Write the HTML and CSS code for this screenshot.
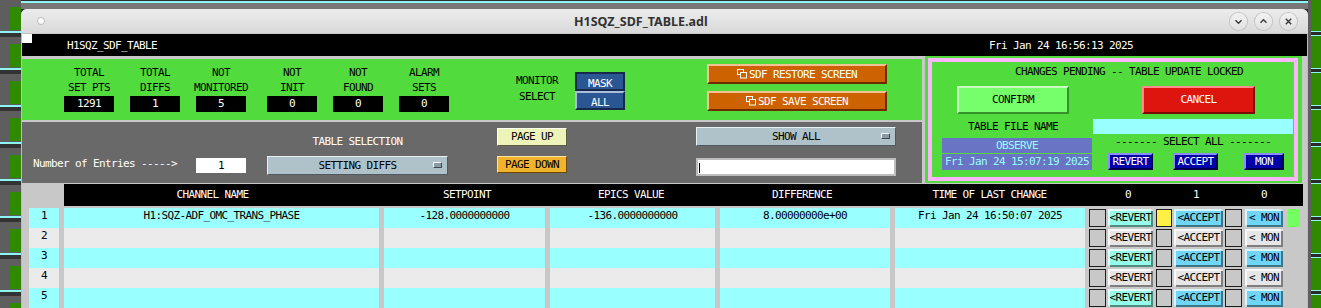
FILE: index.html
```html
<!DOCTYPE html>
<html lang="en">
<head>
    <meta charset="UTF-8">
    <title>H1SQZ_SDF_TABLE.adl</title>
    <link rel="stylesheet" href="styles.css">
</head>
<body>
<div class="desk-left"></div>
<div class="middle">
    <div class="desk-top"></div>
    <div class="window">
        <div class="titlebar">
            <span class="win-dot"></span>
            <span class="win-title">H1SQZ_SDF_TABLE.adl</span>
            <div class="win-buttons">
                <span class="win-btn"><svg width="17" height="17" viewBox="0 0 17 17"><path d="M5.5 7.2 L8.5 10.2 L11.5 7.2" fill="none" stroke="#3a3a3a" stroke-width="1.4"/></svg></span>
                <span class="win-btn"><svg width="17" height="17" viewBox="0 0 17 17"><path d="M5.5 9.8 L8.5 6.8 L11.5 9.8" fill="none" stroke="#3a3a3a" stroke-width="1.4"/></svg></span>
                <span class="win-btn"><svg width="17" height="17" viewBox="0 0 17 17"><path d="M5.8 5.8 L11.2 11.2 M11.2 5.8 L5.8 11.2" fill="none" stroke="#3a3a3a" stroke-width="1.4"/></svg></span>
            </div>
        </div>

        <div class="screen">
            <!-- verhnyaya chernaya polosa -->
            <div class="topbar">
                <span class="corner"></span>
                <span class="screen-name">H1SQZ_SDF_TABLE</span>
                <span class="clock">Fri Jan 24 16:56:13 2025</span>
            </div>

            <div class="upper">
                <div class="left-col">
                    <div class="stats">
                        <div class="stat first"><span>TOTAL</span><span>SET PTS</span><div class="value">1291</div></div>
                        <div class="stat"><span>TOTAL</span><span>DIFFS</span><div class="value">1</div></div>
                        <div class="stat"><span>NOT</span><span>MONITORED</span><div class="value">5</div></div>
                        <div class="stat wide"><span>NOT</span><span>INIT</span><div class="value">0</div></div>
                        <div class="stat"><span>NOT</span><span>FOUND</span><div class="value">0</div></div>
                        <div class="stat"><span>ALARM</span><span>SETS</span><div class="value">0</div></div>

                        <div class="monitor-label"><span>MONITOR</span><span>SELECT</span></div>
                        <div class="choice">
                            <div class="choice-btn pressed">MASK</div>
                            <div class="choice-btn">ALL</div>
                        </div>
                        <div class="screens">
                            <div class="related">
                                <svg width="11" height="10" viewBox="0 0 11 10"><rect x="0.5" y="0.5" width="6" height="5" fill="none" stroke="#fff"/><rect x="3.5" y="3.5" width="6" height="5.5" fill="#cc6200" stroke="#fff"/></svg>SDF RESTORE SCREEN
                            </div>
                            <div class="related second">
                                <svg width="11" height="10" viewBox="0 0 11 10"><rect x="0.5" y="0.5" width="6" height="5" fill="none" stroke="#fff"/><rect x="3.5" y="3.5" width="6" height="5.5" fill="#cc6200" stroke="#fff"/></svg>SDF SAVE SCREEN
                            </div>
                        </div>
                    </div>

                    <div class="selection">
                        <div class="entries-label">Number of Entries -----&gt;</div>
                        <div class="entries-box">1</div>
                        <div class="table-select">
                            <div class="sel-title">TABLE SELECTION</div>
                            <div class="menu">SETTING DIFFS<span class="menu-mark"></span></div>
                        </div>
                        <div class="paging">
                            <div class="page-btn up">PAGE UP</div>
                            <div class="page-btn down">PAGE DOWN</div>
                        </div>
                        <div class="filter">
                            <div class="menu show">SHOW ALL<span class="menu-mark"></span></div>
                            <div class="text-entry"><span class="caret"></span></div>
                        </div>
                    </div>
                </div>

                <div class="pending">
                    <div class="pink">
                        <div class="pend-title">CHANGES PENDING -- TABLE UPDATE LOCKED</div>
                        <div class="pend-buttons">
                            <div class="confirm">CONFIRM</div>
                            <div class="cancel">CANCEL</div>
                        </div>
                        <div class="pend-lower">
                            <div class="file-col">
                                <div class="file-label">TABLE FILE NAME</div>
                                <div class="file-name">OBSERVE</div>
                                <div class="file-date">Fri Jan 24 15:07:19 2025</div>
                            </div>
                            <div class="all-col">
                                <div class="file-path"></div>
                                <div class="select-all">------- SELECT ALL -------</div>
                                <div class="all-buttons">
                                    <div class="all-btn revert">REVERT</div>
                                    <div class="all-btn accept">ACCEPT</div>
                                    <div class="all-btn mon">MON</div>
                                </div>
                            </div>
                        </div>
                    </div>
                </div>
            </div>

            <!-- tablica -->
            <div class="table">
                <div class="thead">
                    <div class="thead-gap"></div>
                    <div class="thead-bar">
                        <span class="h-chan">CHANNEL NAME</span>
                        <span class="h-set">SETPOINT</span>
                        <span class="h-epics">EPICS VALUE</span>
                        <span class="h-diff">DIFFERENCE</span>
                        <span class="h-time">TIME OF LAST CHANGE</span>
                        <span class="h-rev">0</span>
                        <span class="h-acc">1</span>
                        <span class="h-mon">0</span>
                    </div>
                </div>

                <div class="row cyan">
                    <div class="cell num">1</div>
                    <div class="cell chan">H1:SQZ-ADF_OMC_TRANS_PHASE</div>
                    <div class="cell set">-128.0000000000</div>
                    <div class="cell epics">-136.0000000000</div>
                    <div class="cell diff">8.00000000e+00</div>
                    <div class="cell time">Fri Jan 24 16:50:07 2025</div>
                    <div class="sq first"></div><div class="btn rev">&lt;REVERT</div>
                    <div class="sq yellow"></div><div class="btn acc">&lt;ACCEPT</div>
                    <div class="sq"></div><div class="btn mon">&lt; MON</div>
                    <div class="flag"></div>
                </div>
                <div class="row grey">
                    <div class="cell num">2</div>
                    <div class="cell chan"></div><div class="cell set"></div><div class="cell epics"></div><div class="cell diff"></div><div class="cell time"></div>
                    <div class="sq first"></div><div class="btn rev">&lt;REVERT</div>
                    <div class="sq"></div><div class="btn acc">&lt;ACCEPT</div>
                    <div class="sq"></div><div class="btn mon">&lt; MON</div>
                </div>
                <div class="row cyan">
                    <div class="cell num">3</div>
                    <div class="cell chan"></div><div class="cell set"></div><div class="cell epics"></div><div class="cell diff"></div><div class="cell time"></div>
                    <div class="sq first"></div><div class="btn rev">&lt;REVERT</div>
                    <div class="sq"></div><div class="btn acc">&lt;ACCEPT</div>
                    <div class="sq"></div><div class="btn mon">&lt; MON</div>
                </div>
                <div class="row grey">
                    <div class="cell num">4</div>
                    <div class="cell chan"></div><div class="cell set"></div><div class="cell epics"></div><div class="cell diff"></div><div class="cell time"></div>
                    <div class="sq first"></div><div class="btn rev">&lt;REVERT</div>
                    <div class="sq"></div><div class="btn acc">&lt;ACCEPT</div>
                    <div class="sq"></div><div class="btn mon">&lt; MON</div>
                </div>
                <div class="row cyan">
                    <div class="cell num">5</div>
                    <div class="cell chan"></div><div class="cell set"></div><div class="cell epics"></div><div class="cell diff"></div><div class="cell time"></div>
                    <div class="sq first"></div><div class="btn rev">&lt;REVERT</div>
                    <div class="sq"></div><div class="btn acc">&lt;ACCEPT</div>
                    <div class="sq"></div><div class="btn mon">&lt; MON</div>
                </div>
            </div>
        </div>
    </div>
</div>
<div class="desk-right"></div>
</body>
</html>
```

FILE: styles.css
```css
body {
    margin: 0;
    width: 1321px;
    height: 308px;
    overflow: hidden;
    display: flex;
    background: #2e2e2e;
}
/* rabochiy stol vokrug okna */
.desk-left {
    width: 21px;
    height: 308px;
    background-color: #5e5e5e;
    background-image:
        repeating-linear-gradient(to bottom, transparent 0 7px, #2f8a00 7px 30px, transparent 30px 37px),
        repeating-linear-gradient(to bottom, transparent 0 31px, #8ef4f4 31px 33px, #333 33px 37px);
    background-size: 11px 100%, 100% 100%;
    background-position: 10px 0, 0 0;
    background-repeat: no-repeat;
}
.desk-right {
    width: 13px;
    height: 308px;
    background-color: #2f8a00;
    background-image:
        repeating-linear-gradient(to bottom, transparent 0 31px, #8ef4f4 31px 32px, #2a2a2a 32px 35px, #8ef4f4 35px 36px, transparent 36px 37px);
    border-left: 3px solid #5e5e5e;
    box-sizing: border-box;
}
.middle {
    width: 1287px;
    display: flex;
    flex-direction: column;
}
.desk-top {
    height: 9px;
    background: linear-gradient(#2e2e2e 0 1px, #8ef4f4 1px 3px, #777 3px 9px);
}
.window {
    flex: 1;
    background: #c8c8c8;
    border-radius: 6px 6px 0 0;
    overflow: hidden;
}
.titlebar {
    height: 25px;
    display: flex;
    align-items: center;
    background: linear-gradient(#ececec, #d9d9d9);
    border-bottom: 1px solid #c4c4c4;
    box-sizing: border-box;
}
.win-dot {
    width: 6px;
    height: 6px;
    margin-left: 16px;
    border-radius: 50%;
    background: #fafafa;
    border: 1px solid #bbb;
}
.win-title {
    margin-left: 529px;
    font-family: "Noto Sans", sans-serif;
    font-weight: bold;
    font-size: 12.5px;
    color: #333;
}
.win-buttons {
    margin-left: auto;
    margin-right: 11px;
    display: flex;
    gap: 8px;
}
.win-btn {
    width: 17px;
    height: 17px;
    border-radius: 50%;
    background: linear-gradient(#f2f2f2, #e0e0e0);
    box-shadow: 0 0 0 1px #c2c2c2;
    display: flex;
}

/* MEDM ekran */
.screen {
    font-family: "DejaVu Sans Mono", monospace;
    font-size: 11px;
    letter-spacing: -0.62px;
    color: #000;
    border-left: 1px solid #bdbdbd;
    border-right: 1px solid #bdbdbd;
}
.topbar {
    height: 22px;
    background: #000;
    color: #fff;
    display: flex;
    align-items: center;
}
.corner {
    align-self: flex-start;
    width: 10px;
    height: 9px;
    background: #fff;
}
.screen-name {
    margin-left: 35px;
}
.clock {
    margin-left: 832px;
}

.upper {
    display: flex;
    height: 127px;
}
.left-col {
    width: 900px;
}
.stats {
    margin-top: 3px;
    height: 61px;
    background: #52db3c;
    display: flex;
    align-items: flex-start;
}
.stat {
    width: 50px;
    margin-left: 16px;
    padding-top: 6px;
    display: flex;
    flex-direction: column;
    align-items: center;
    line-height: 15px;
    white-space: nowrap;
}
.stat.first {
    margin-left: 42px;
}
.stat.wide {
    margin-left: 21px;
}
.value {
    margin-top: 1px;
    width: 50px;
    height: 16px;
    line-height: 16px;
    background: #000;
    color: #fff;
    text-align: center;
}
.monitor-label {
    width: 60px;
    margin-left: 58px;
    padding-top: 14px;
    display: flex;
    flex-direction: column;
    align-items: center;
    line-height: 16px;
}
.choice {
    width: 50px;
    margin-left: 8px;
    margin-top: 13px;
}
.choice-btn {
    height: 19px;
    line-height: 19px;
    box-sizing: border-box;
    background: #2b5694;
    color: #fff;
    text-align: center;
    border: 2px solid;
    border-color: #a8bedb #17284a #17284a #a8bedb;
}
.choice-btn.pressed {
    border-color: #17284a;
}
.screens {
    margin-left: 82px;
    margin-top: 5px;
    width: 180px;
}
.related {
    height: 20px;
    box-sizing: border-box;
    background: #cc6200;
    color: #fff;
    border: 2px solid;
    border-color: #f3c394 #6b2c00 #6b2c00 #f3c394;
    display: flex;
    align-items: center;
    justify-content: center;
}
.related svg {
    margin-right: 1px;
}
.related.second {
    margin-top: 7px;
}

.selection {
    margin-top: 2px;
    height: 61px;
    background: #696969;
    display: flex;
    align-items: flex-start;
}
.entries-label {
    width: 163px;
    padding-left: 11px;
    margin-top: 35px;
    line-height: 14px;
    color: #fff;
    white-space: nowrap;
}
.entries-box {
    width: 50px;
    height: 15px;
    margin-top: 36px;
    line-height: 15px;
    background: #fff;
    text-align: center;
}
.table-select {
    width: 181px;
    margin-left: 21px;
    margin-top: 13px;
}
.sel-title {
    line-height: 14px;
    color: #fff;
    text-align: center;
}
.menu {
    position: relative;
    margin-top: 7px;
    height: 19px;
    line-height: 17px;
    box-sizing: border-box;
    background: #afc2ca;
    border: 1px solid;
    border-color: #e8f0f4 #4e5a60 #4e5a60 #e8f0f4;
    text-align: center;
}
.menu-mark {
    position: absolute;
    right: 5px;
    top: 5px;
    width: 9px;
    height: 6px;
    box-sizing: border-box;
    background: #8a9aa2;
    border: 1px solid;
    border-color: #f4f8fa #3e484e #3e484e #f4f8fa;
}
.paging {
    width: 70px;
    margin-left: 49px;
    margin-top: 6px;
}
.page-btn {
    box-sizing: border-box;
    text-align: center;
    border: 1px solid;
    border-color: #fdfff0 #5c5c40 #5c5c40 #fdfff0;
}
.page-btn.up {
    height: 18px;
    line-height: 16px;
    background: #edf3b9;
}
.page-btn.down {
    margin-top: 10px;
    height: 17px;
    line-height: 15px;
    background: #f1b22c;
    border-color: #ffe2a0 #6a4a00 #6a4a00 #ffe2a0;
}
.filter {
    width: 200px;
    margin-left: 129px;
    margin-top: 5px;
}
.menu.show {
    margin-top: 0;
}
.text-entry {
    margin-top: 12px;
    height: 18px;
    box-sizing: border-box;
    background: #fff;
    border: 2px solid #bdbdbd;
    position: relative;
}
.caret {
    position: absolute;
    left: 1px;
    top: 3px;
    width: 1px;
    height: 10px;
    background: #000;
}

/* pravaya panel */
.pending {
    margin-left: 3px;
    width: 377px;
    height: 127px;
    background: #52db3c;
    display: flex;
}
.pink {
    margin: 2px 4px 2px 3px;
    width: 370px;
    height: 123px;
    box-sizing: border-box;
    border: 4px solid #ffb4ff;
}
.pend-title {
    height: 20px;
    line-height: 20px;
    padding-left: 83px;
    white-space: nowrap;
}
.pend-buttons {
    margin-top: 4px;
    display: flex;
    height: 28px;
}
.confirm, .cancel {
    box-sizing: border-box;
    height: 28px;
    line-height: 24px;
    text-align: center;
    border: 2px solid;
}
.confirm {
    margin-left: 25px;
    width: 112px;
    background: #77fe6b;
    border-color: #c8ffc0 #35912a #35912a #c8ffc0;
}
.cancel {
    margin-left: 73px;
    width: 113px;
    background: #de150f;
    color: #fff;
    border-color: #ff8c8c #7a0a08 #7a0a08 #ff8c8c;
}
.pend-lower {
    display: flex;
}
.file-col {
    width: 150px;
    margin-left: 10px;
}
.file-label {
    margin-top: 5px;
    height: 16px;
    line-height: 16px;
    padding-right: 8px;
    text-align: center;
}
.file-name, .file-date {
    background: #6a74c4;
    color: #9ff;
    text-align: center;
}
.file-name {
    margin-top: 3px;
    height: 15px;
    line-height: 15px;
}
.file-date {
    margin-top: 1px;
    height: 16px;
    line-height: 16px;
}
.all-col {
    width: 200px;
    margin-left: 1px;
}
.file-path {
    margin-top: 5px;
    height: 15px;
    background: #9ff;
}
.select-all {
    margin-top: 1px;
    height: 14px;
    line-height: 14px;
    text-align: center;
    white-space: nowrap;
}
.all-buttons {
    margin-top: 4px;
    display: flex;
}
.all-btn {
    height: 17px;
    line-height: 13px;
    box-sizing: border-box;
    background: #0000a8;
    color: #fff;
    text-align: center;
    border: 2px solid;
    border-color: #8c8cff #00004a #00004a #8c8cff;
}
.all-btn.revert {
    margin-left: 15px;
    width: 45px;
}
.all-btn.accept {
    margin-left: 20px;
    width: 45px;
}
.all-btn.mon {
    margin-left: 26px;
    width: 40px;
}

/* tablica */
.table {
    margin-top: 1px;
}
.thead {
    display: flex;
    height: 22px;
}
.thead-gap {
    width: 42px;
}
.thead-bar {
    width: 1239px;
    background: #000;
    color: #fff;
    display: flex;
    line-height: 21px;
}
.thead-bar span {
    text-align: center;
    white-space: nowrap;
    box-sizing: border-box;
}
.h-chan { width: 320px; padding-right: 23px; }
.h-set { width: 166px; }
.h-epics { width: 170px; padding-right: 8px; }
.h-diff { width: 175px; padding-right: 11px; }
.h-time { width: 194px; padding-right: 5px; }
.h-rev { width: 67px; padding-left: 11px; }
.h-acc { width: 69px; padding-left: 11px; }
.h-mon { width: 78px; }

.table .thead + .row {
    margin-top: 2px;
}
.row {
    display: flex;
    height: 20px;
}
.cell {
    margin-left: 5px;
    padding-top: 1px;
    line-height: 13px;
    text-align: center;
    white-space: nowrap;
}
.cyan .cell { background: #99ffff; }
.grey .cell { background: #ebebeb; }
.cell.num { margin-left: 7px; width: 30px; }
.cell.chan { width: 315px; }
.cell.set { width: 161px; }
.cell.epics { width: 165px; }
.cell.diff { width: 170px; }
.cell.time { width: 190px; }

.sq {
    margin: 1px 0 0 2px;
    width: 16px;
    height: 18px;
    box-sizing: border-box;
    background: #c8c8c8;
    border: 1px solid #1e1e1e;
}
.sq.first {
    margin-left: 4px;
    width: 17px;
}
.sq.yellow {
    background: #fff046;
}
.row .sq:nth-of-type(n) + .btn {
    margin-left: 2px;
}
.btn {
    margin-top: 1px;
    height: 18px;
    line-height: 18px;
    box-sizing: border-box;
    text-align: center;
    white-space: nowrap;
    background: #e6e6e6;
    box-shadow: inset 2px 2px 0 rgba(255, 255, 255, 0.75), inset -2px -2px 0 rgba(0, 0, 0, 0.45);
}
.btn.rev { width: 45px; }
.btn.acc { width: 49px; }
.btn.mon { width: 38px; }
.btn.rev + .sq { margin-left: 3px; }
.btn.acc + .sq { margin-left: 2px; width: 17px; }
.cyan .btn.rev { background: #94fce9; }
.cyan .btn.acc, .cyan .btn.mon { background: #6fd6f8; }
.btn.acc + .sq + .btn { margin-left: 3px; }
.flag {
    margin: 1px 0 0 5px;
    width: 12px;
    height: 18px;
    background: #72ff5f;
}
```
